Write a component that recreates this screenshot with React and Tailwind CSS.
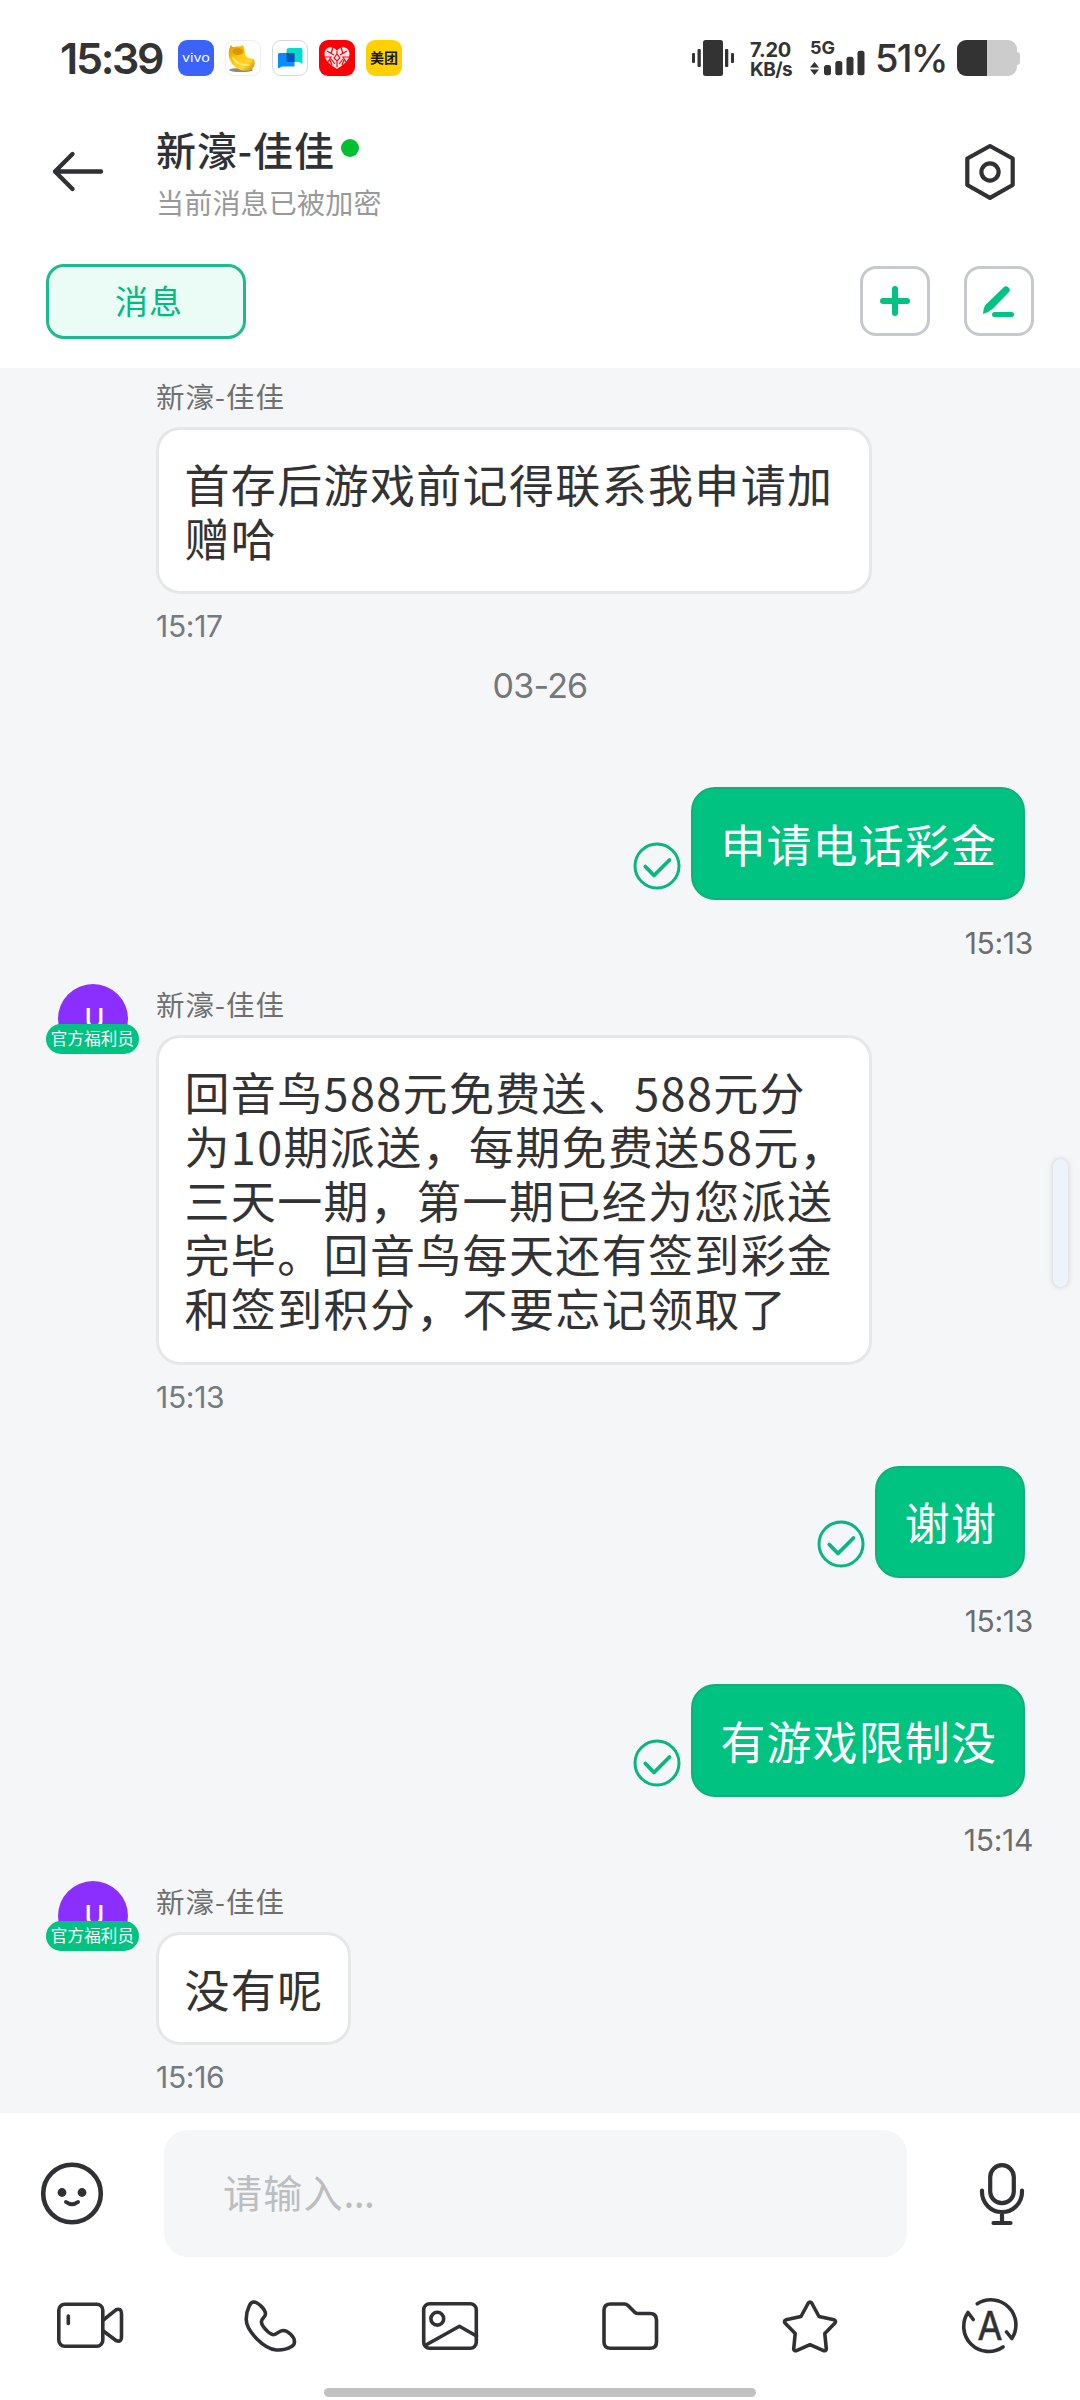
import clsx from "clsx";

const messages = [
  {
    type: "in",
    name: "新濠-佳佳",
    lines: ["首存后游戏前记得联系我申请加", "赠哈"],
    time: "15:17",
    spacing: "pt-[8px]",
  },
  { type: "date", text: "03-26" },
  {
    type: "out",
    text: "申请电话彩金",
    time: "15:13",
    spacing: "pt-[81px]",
  },
  {
    type: "in",
    name: "新濠-佳佳",
    avatar: true,
    lines: [
      "回音鸟588元免费送、588元分",
      "为10期派送，每期免费送58元，",
      "三天一期，第一期已经为您派送",
      "完毕。回音鸟每天还有签到彩金",
      "和签到积分，不要忘记领取了",
    ],
    time: "15:13",
    spacing: "pt-[21px]",
  },
  { type: "out", text: "谢谢", time: "15:13", spacing: "pt-[49px]" },
  { type: "out", text: "有游戏限制没", time: "15:14", spacing: "pt-[43px]" },
  {
    type: "in",
    name: "新濠-佳佳",
    avatar: true,
    lines: ["没有呢"],
    time: "15:16",
    spacing: "pt-[21px]",
  },
];

function AppBadges() {
  return (
    <div className="ml-[17px] flex gap-[11px]">
      <div className="h-9 w-9 rounded-[9px] bg-[#3b63fb]">
        <svg width="36" height="36" viewBox="0 0 36 36">
          <text
            x="18"
            y="22"
            textAnchor="middle"
            textLength="28"
            lengthAdjust="spacingAndGlyphs"
            fontFamily="Inter, sans-serif"
            fontSize="11"
            fill="#fff"
          >
            vivo
          </text>
        </svg>
      </div>
      <div className="h-9 w-9 rounded-[9px] border border-[#eeeeee] bg-white">
        <svg width="34" height="34" viewBox="0 0 34 34">
          <defs>
            <linearGradient id="gold" x1="0" y1="0" x2="1" y2="1">
              <stop offset="0" stopColor="#d99a00" />
              <stop offset="0.4" stopColor="#ffc90a" />
              <stop offset="0.7" stopColor="#ffd52a" />
              <stop offset="1" stopColor="#c98200" />
            </linearGradient>
          </defs>
          <ellipse cx="15" cy="29" rx="12" ry="2" fill="#8f8a80" />
          <path
            d="M5 4C6.500 6.500 8 6.500 10 5.500C13 5.500 15 6 16.500 4C19 7 18.500 10 19 13C20 17 24 17 27.500 18C30 20 29 27 24.500 29C18 31.500 8 28 4.500 20C2 15 2 9 5 4Z"
            fill="url(#gold)"
          />
          <ellipse
            cx="12"
            cy="10.500"
            rx="5.500"
            ry="3.500"
            fill="#e09500"
          />
          <path
            d="M7 17Q12 25 23 24"
            fill="none"
            stroke="#ffe98a"
            strokeWidth="1.500"
            strokeLinecap="round"
          />
        </svg>
      </div>
      <div className="h-9 w-9 rounded-[9px] border border-[#d5d8de] bg-white">
        <svg width="34" height="34" viewBox="0 0 34 34">
          <path
            d="M16 7H28Q29.500 7 29.500 8.500V23L26 21H15Q13.500 21 13.500 19.500V9.500Q13.500 7 16 7Z"
            fill="#06dacb"
          />
          <path
            d="M6.500 12H21.500V25.500H9L5 27.500V13.500Q5 12 6.500 12Z"
            fill="#078dff"
          />
          <path d="M13.500 12H21.500V21H15Q13.500 21 13.500 19.500Z" fill="#0b53b5" />
        </svg>
      </div>
      <div className="h-9 w-9 rounded-[9px] bg-[#fa0007]">
        <svg width="36" height="36" viewBox="0 0 36 36">
          <path
            d="M18 29C12 25 5.500 20.500 5.500 14C5.500 6.500 14.500 5 18 11C21.500 5 30.500 6.500 30.500 14C30.500 20.500 24 25 18 29Z"
            fill="#ffe9e9"
          />
          <path
            d="M8 11L15 15M14 7L12 14M28 11L21 15M22 7L24 14M6 17H12L9 22M30 17H24L27 22M15 18L18 14L21 18L18 21ZM12 19L16 24M24 19L20 24M18 21V27M13 25L11 20M23 25L25 20M18 11V14"
            fill="none"
            stroke="#fa0007"
            strokeWidth="1.200"
          />
        </svg>
      </div>
      <div className="flex h-9 w-9 items-center justify-center rounded-[9px] bg-[#ffd100] text-[14px] leading-none font-bold text-[#1c1a10]">
        美团
      </div>
    </div>
  );
}

function StatusBar() {
  return (
    <div className="flex h-[116px] shrink-0 items-center pl-[60px] font-[Inter,'Noto_Sans_CJK_SC',sans-serif] text-[#333333]">
      <span className="w-[101px] text-[43px] leading-none font-semibold tracking-[-2.300px] whitespace-nowrap">
        15:39
      </span>
      <AppBadges />
      <svg
        className="ml-[290px]"
        width="42"
        height="36"
        viewBox="0 0 42 36"
        fill="#333333"
      >
        <rect x="11" width="20" height="36" rx="2.500" />
        <rect x="5.500" y="9" width="3.300" height="18" rx="1" />
        <rect x="33" y="9" width="3.300" height="18" rx="1" />
        <rect x="0" y="13" width="3" height="10" rx="1" />
        <rect x="39" y="13" width="3" height="10" rx="1" />
      </svg>
      <div className="ml-[16px] flex w-[45px] flex-col pt-[3px] text-[20px] leading-[20px] font-bold whitespace-nowrap">
        <span className="tracking-[-0.200px]">7.20</span>
        <span className="text-[19px] tracking-[-0.500px]">KB/s</span>
      </div>
      <svg
        className="ml-[15px]"
        width="56"
        height="40"
        viewBox="0 -2 56 40"
        fill="#333333"
      >
        <text
          x="0"
          y="13.500"
          fontSize="18"
          fontWeight="700"
          fontFamily="Inter, sans-serif"
        >
          5G
        </text>
        <path d="M0 27.500L4.500 22L9 27.500ZM0 29.500H9L4.500 35Z" />
        <rect x="14" y="25" width="7" height="10.300" rx="2.500" />
        <rect x="25.300" y="21" width="7" height="14.300" rx="2.500" />
        <rect x="36.500" y="16.700" width="7" height="18.600" rx="2.500" />
        <rect x="47.500" y="10.700" width="7" height="24.600" rx="2.500" />
      </svg>
      <span className="ml-[9px] w-[71px] text-[38px] leading-none font-medium tracking-[-1.800px] whitespace-nowrap">
        51%
      </span>
      <svg className="ml-[11px]" width="63" height="36" viewBox="0 0 63 36">
        <path
          d="M30 0H51a9 9 0 0 1 9 9V12Q63 12.500 63 15V22Q63 24.500 60 25V27a9 9 0 0 1-9 9H30Z"
          fill="#cccccc"
        />
        <path d="M9 0H30V36H9A9 9 0 0 1 0 27V9A9 9 0 0 1 9 0Z" fill="#333333" />
      </svg>
    </div>
  );
}

function Header() {
  return (
    <header className="flex h-[112px] shrink-0 items-center">
      <button className="ml-[50px] flex w-14 justify-center">
        <svg
          width="56"
          height="44"
          viewBox="0 0 56 44"
          fill="none"
          stroke="#303134"
          strokeWidth="4.400"
          strokeLinecap="round"
          strokeLinejoin="round"
        >
          <path d="M51 21.500H5M22.500 4L5 21.500L22.500 39" />
        </svg>
      </button>
      <div className="ml-[50px] flex flex-1 flex-col pt-[3px]">
        <div className="flex h-11 items-center">
          <h1 className="text-[40px] leading-[44px] font-medium tracking-[0.900px] text-[#303134]">
            新濠-佳佳
          </h1>
          <span className="mb-[3px] ml-[6px] h-[18px] w-[18px] rounded-full bg-[#00c031]" />
        </div>
        <p className="mt-[13px] text-[28px] leading-[36px] tracking-[0.200px] text-[#999999]">
          当前消息已被加密
        </p>
      </div>
      <button className="mr-[62px]">
        <svg
          width="56"
          height="60"
          viewBox="0 0 56 60"
          fill="none"
          stroke="#303134"
          strokeWidth="4.200"
          strokeLinejoin="round"
        >
          <path d="M28 4L50.700 16.500V43L28 55.800L5.300 43V16.500Z" />
          <circle cx="28" cy="30" r="8.600" />
        </svg>
      </button>
    </header>
  );
}

function Tabs() {
  return (
    <div className="flex h-[140px] shrink-0 items-start pt-9">
      <button className="ml-[46px] h-[75px] w-[200px] rounded-[18px] border-[3px] border-[#1fba8c] bg-[#ebfbf6] pb-[2px] pl-[6px] text-[33px] leading-none tracking-[0.900px] text-[#00bd7e]">
        消息
      </button>
      <div className="mt-[2px] ml-auto mr-[46px] flex gap-[34px]">
        <button className="flex h-[70px] w-[70px] items-center justify-center rounded-[16px] border-3 border-[#c6c9ce]">
          <svg width="30" height="30" viewBox="0 0 30 30">
            <path
              d="M15 3V27M3 15H27"
              stroke="#00c281"
              strokeWidth="6"
              strokeLinecap="round"
            />
          </svg>
        </button>
        <button className="flex h-[70px] w-[70px] items-center justify-center rounded-[16px] border-3 border-[#c6c9ce]">
          <svg
            className="-ml-[3px]"
            width="34"
            height="34"
            viewBox="0 0 34 34"
            fill="#00c281"
          >
            <path d="M23 3Q25 1.300 27.500 3.500Q30 6 28 8L11.500 25Q8 28 2 30Q2 25 4 21.500Z" />
            <rect x="11" y="28" width="22" height="5" rx="2.500" />
          </svg>
        </button>
      </div>
    </div>
  );
}

function Avatar() {
  return (
    <div className="relative ml-[46px] h-[70px] w-[94px]">
      <div className="mx-auto flex h-[70px] w-[70px] items-center justify-center rounded-full bg-[#8a2fff]">
        <span className="ml-[3px] font-[Inter,sans-serif] text-[27px] leading-none font-medium text-white">
          U
        </span>
      </div>
      <span className="absolute bottom-0 left-0 flex h-[30px] w-[93px] items-center justify-center rounded-full bg-[#00c281] pb-px text-[16.500px] leading-none tracking-[0.200px] whitespace-nowrap text-white">
        官方福利员
      </span>
    </div>
  );
}

function IncomingMessage({ message }) {
  const multiline = message.lines.length > 1;

  return (
    <div className={clsx("flex", message.spacing)}>
      <div className="w-[156px] shrink-0">{message.avatar && <Avatar />}</div>
      <div className="flex flex-col items-start">
        <p className="mb-[11px] text-[28.500px] leading-[40px] tracking-[1px] text-[#6f6f6f]">
          {message.name}
        </p>
        <div
          className={clsx(
            "rounded-[24px] border-3 border-[#e6e7e9] bg-white pt-[26.900px] pb-[25.900px] pl-[25.500px] text-[45px] leading-[54.200px] tracking-[1.350px] whitespace-nowrap text-[#333333]",
            multiline ? "w-[716px]" : "pr-[24px]"
          )}
        >
          {message.lines.map((line) => (
            <p key={line}>{line}</p>
          ))}
        </div>
        <p className="mt-3 font-[Inter,sans-serif] text-[30px] leading-[40px] tracking-[-0.300px] text-[#757a80]">
          {message.time}
        </p>
      </div>
    </div>
  );
}

function OutgoingMessage({ message }) {
  return (
    <div className={clsx("flex flex-col items-end pr-[47px]", message.spacing)}>
      <div className="mr-[8px] flex items-end">
        <svg
          className="mr-[10px] mb-[10px]"
          width="48"
          height="48"
          viewBox="0 0 48 48"
          fill="none"
          stroke="#08b780"
          strokeLinecap="round"
          strokeLinejoin="round"
        >
          <circle cx="24" cy="24" r="22" strokeWidth="3" />
          <path d="M12.300 24.500L21 33.500L36.500 18" strokeWidth="3.800" />
        </svg>
        <div className="rounded-[24px] border-2 border-[#0fb07a] bg-[#00c281] pt-[27.700px] pb-[26.700px] pr-[26px] pl-[27.500px] text-[45px] leading-[54.200px] tracking-[1.100px] whitespace-nowrap text-white">
          {message.text}
        </div>
      </div>
      <p className="mt-[23px] font-[Inter,sans-serif] text-[30px] leading-[40px] tracking-[-0.300px] text-[#6d6d6d]">
        {message.time}
      </p>
    </div>
  );
}

function Chat() {
  return (
    <main className="relative h-[1745px] shrink-0 bg-[#f4f6f8]">
      {messages.map((message, i) => {
        if (message.type === "date") {
          return (
            <p
              key={i}
              className="pt-[20px] text-center font-[Inter,sans-serif] text-[34px] leading-[40px] tracking-[-0.800px] text-[#75777b]"
            >
              {message.text}
            </p>
          );
        }
        return message.type === "in" ? (
          <IncomingMessage key={i} message={message} />
        ) : (
          <OutgoingMessage key={i} message={message} />
        );
      })}
      {/* Side panel handle floating over the chat */}
      <div className="absolute top-[791px] right-[12px] h-[128px] w-[15px] rounded-full bg-[#edf2fb] shadow-[0_0_5px_1px_rgba(0,0,0,0.12)]" />
    </main>
  );
}

function InputBar() {
  return (
    <div className="flex h-[161px] shrink-0 items-center bg-white">
      <svg
        className="ml-10"
        width="64"
        height="64"
        viewBox="0 0 64 64"
        fill="none"
        stroke="#303134"
      >
        <circle cx="32" cy="31.500" r="28.800" strokeWidth="4.600" />
        <circle cx="22" cy="30.500" r="4.400" fill="#303134" stroke="none" />
        <circle cx="42" cy="30.500" r="4.400" fill="#303134" stroke="none" />
        <path
          d="M26 40Q32 44.500 38 40"
          strokeWidth="4"
          strokeLinecap="round"
        />
      </svg>
      <div className="ml-[60px] flex h-[127px] w-[743px] items-center rounded-[24px] bg-[#f4f6f8] pb-[4px] pl-[59px] text-[39px] leading-none tracking-[1.200px] text-[#bcbdc0]">
        请输入<span className="tracking-[-0.700px]">...</span>
      </div>
      <svg
        className="ml-[71px]"
        width="48"
        height="66"
        viewBox="0 0 48 66"
        fill="none"
        stroke="#303134"
        strokeWidth="4.200"
        strokeLinecap="round"
      >
        <rect x="12.200" y="4.200" width="23.600" height="38" rx="11.800" />
        <path d="M4 29.500V31A20 20 0 0 0 44 31V29.500M24 51V62M15.500 62H32.500" />
      </svg>
    </div>
  );
}

function ToolIcon({ width, height, children }) {
  return (
    <svg
      width={width}
      height={height}
      viewBox={`0 0 ${width} ${height}`}
      fill="none"
      stroke="#303134"
      strokeWidth="3.600"
      strokeLinecap="round"
      strokeLinejoin="round"
    >
      {children}
    </svg>
  );
}

function Toolbar() {
  return (
    <div className="grid h-[104px] shrink-0 grid-cols-6 items-center justify-items-center bg-white">
      <ToolIcon width={68} height={48}>
        <rect x="2.800" y="2.300" width="44" height="42" rx="6" />
        <path d="M47.300 18L60 7.800Q65.500 5.800 65.500 11.500V35Q65.500 40.700 60 38.500L47.300 29M12.300 14V21.500" />
      </ToolIcon>
      <ToolIcon width={54} height={56}>
        <path d="M10.800 4C14.500 4 22.500 11 22.500 16C22.500 19.500 18.400 20 18.400 23.700C18.400 28 26.500 36.700 30.400 36.700C34.500 36.700 35.500 32.500 40 32.500C45 32.500 51.500 39 51.500 43.500C51.500 47 50 47.800 48.500 48.500Q42 52.500 33.500 52C21 51 3.200 33 3.200 21.300C3.200 15 5 10.500 6.200 8C7.500 5 8.500 4 10.800 4Z" />
      </ToolIcon>
      <ToolIcon width={60} height={52}>
        <rect x="3.700" y="3.800" width="52.600" height="44.500" rx="6" />
        <circle cx="17.300" cy="18.700" r="6.400" />
        <path d="M5 45.500L39.400 26.300L56.500 36" />
      </ToolIcon>
      <ToolIcon width={60} height={52}>
        <path d="M10.500 4H24.500Q26.500 4 28 5.500L35 12.500Q36 13.500 38 13.500H50Q56.500 13.500 56.500 20V42Q56.500 48.300 50 48.300H10.500Q4 48.300 4 42V10.500Q4 4 10.500 4Z" />
      </ToolIcon>
      <ToolIcon width={58} height={56}>
        <path d="M27.300 5Q29 3 30.700 5L38 18.500L53 21.800Q55.500 23 54 25L43.800 35.500L45.300 51Q45 53.300 42.500 52.700L29 46.700L15.500 52.700Q13 53.300 12.700 51L14.200 35.500L4 25Q2.500 23 5 21.800L20 18.500Z" />
      </ToolIcon>
      <ToolIcon width={60} height={60}>
        <path d="M17.300 7.800A25 25 0 0 1 51.800 42.500L46.600 36M43 51A25 25 0 0 1 8 16.500L13.200 23.500" />
        <text
          x="30"
          y="44"
          textAnchor="middle"
          textLength="25"
          lengthAdjust="spacingAndGlyphs"
          fontFamily="Inter, sans-serif"
          fontSize="39"
          fontWeight="400"
          fill="#303134"
          strokeWidth="0.600"
        >
          A
        </text>
      </ToolIcon>
    </div>
  );
}

export default function App() {
  return (
    <div
      lang="zh-CN"
      className="relative flex h-[2400px] w-[1080px] flex-col overflow-hidden bg-white font-['Noto_Sans_CJK_SC',sans-serif]"
    >
      <StatusBar />
      <Header />
      <Tabs />
      <Chat />
      <InputBar />
      <Toolbar />
      <div className="mx-auto mt-[10px] h-[9px] w-[432px] rounded-full bg-[#c1c1c1]" />
    </div>
  );
}
